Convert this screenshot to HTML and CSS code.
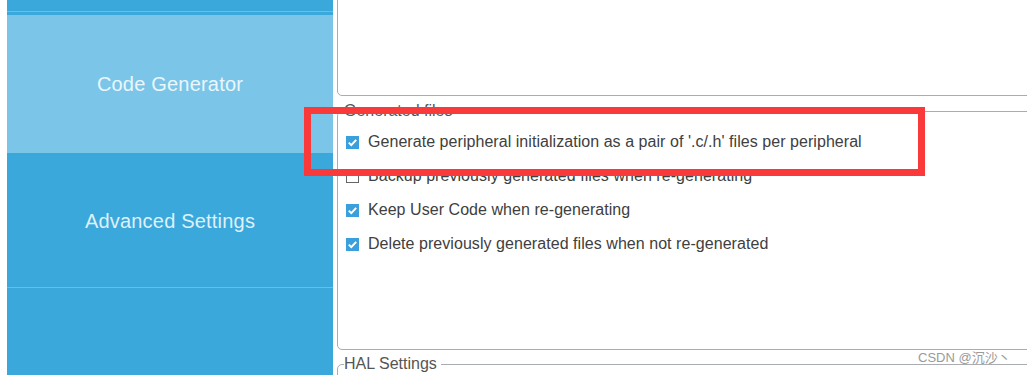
FILE: index.html
```html
<!DOCTYPE html>
<html lang="en">
<head>
    <meta charset="UTF-8">
    <title>Code Generator</title>
    <link rel="stylesheet" href="styles.css">
</head>
<body>
    <div class="page">
        <div class="sidebar">
            <div class="nav-item nav-top"></div>
            <div class="nav-strip"></div>
            <div class="nav-item nav-active">Code Generator</div>
            <div class="nav-item nav-adv">Advanced Settings</div>
            <div class="nav-item nav-rest"></div>
        </div>

        <div class="main">
            <div class="top-box"></div>

            <fieldset class="group group-files">
                <legend>Generated files</legend>
                <div class="check-row">
                    <span class="box checked"><svg viewBox="0 0 13 13"><path d="M2.8 6.6 L5.3 9.1 L10.2 3.9" fill="none" stroke="#fff" stroke-width="2"/></svg></span>
                    <span class="label">Generate peripheral initialization as a pair of '.c/.h' files per peripheral</span>
                </div>
                <div class="check-row">
                    <span class="box"></span>
                    <span class="label">Backup previously generated files when re-generating</span>
                </div>
                <div class="check-row">
                    <span class="box checked"><svg viewBox="0 0 13 13"><path d="M2.8 6.6 L5.3 9.1 L10.2 3.9" fill="none" stroke="#fff" stroke-width="2"/></svg></span>
                    <span class="label">Keep User Code when re-generating</span>
                </div>
                <div class="check-row">
                    <span class="box checked"><svg viewBox="0 0 13 13"><path d="M2.8 6.6 L5.3 9.1 L10.2 3.9" fill="none" stroke="#fff" stroke-width="2"/></svg></span>
                    <span class="label">Delete previously generated files when not re-generated</span>
                </div>
            </fieldset>

            <fieldset class="group group-hal">
                <legend>HAL Settings</legend>
            </fieldset>
        </div>
    </div>

    <div class="highlight"></div>
    <div class="watermark">CSDN @沉沙丶</div>
</body>
</html>
```

FILE: styles.css
```css
html, body {
    margin: 0;
    padding: 0;
    background: #fff;
}
body {
    width: 1027px;
    height: 375px;
    overflow: hidden;
    position: relative;
    font-family: "Liberation Sans", Arial, sans-serif;
}
.page {
    display: flex;
    height: 375px;
}
.sidebar {
    width: 326px;
    margin-left: 7px;
    display: flex;
    flex-direction: column;
    background: #3aa8db;
}
.nav-item {
    display: flex;
    align-items: center;
    justify-content: center;
    font-size: 20px;
    letter-spacing: 0.2px;
    color: #dff0fa;
}
.nav-top {
    height: 11px;
    border-bottom: 1px solid #6cbde4;
}
.nav-strip {
    height: 3px;
}
.nav-active {
    height: 138px;
    background: #7bc6e8;
    color: #eaf6fc;
}
.nav-adv {
    height: 131px;
    padding-top: 3px;
    border-bottom: 1px solid #6cbde4;
}
.nav-rest {
    flex: 1;
}
.main {
    margin-left: 4px;
    flex: 1;
    overflow: hidden;
}
.top-box {
    width: 760px;
    height: 114px;
    margin-top: -20px;
    border: 1px solid #a9acb0;
    border-radius: 5px;
}
.group {
    width: 760px;
    margin: 0;
    padding: 0 0 0 8px;
    border: 1px solid #a9acb0;
    border-radius: 5px;
    box-sizing: border-box;
}
.group legend {
    font-size: 16px;
    line-height: 18px;
    color: #555;
    padding: 0 4px 0 0;
    margin-left: -2px;
}
.group-files {
    margin-top: 6px;
    height: 248px;
    padding-top: 5px;
}
.group-hal {
    margin-top: 5px;
    height: 60px;
}
.check-row {
    display: flex;
    align-items: center;
    height: 34px;
}
.box {
    width: 13px;
    height: 13px;
    box-sizing: border-box;
    border: 1px solid #666;
    background: #fff;
    margin-right: 9px;
    flex: none;
}
.box svg {
    display: block;
    width: 13px;
    height: 13px;
}
.box.checked {
    border: none;
    background: #3b9fdc;
}
.label {
    font-size: 16px;
    letter-spacing: 0.05px;
    color: #404040;
    white-space: nowrap;
}
.highlight {
    position: absolute;
    left: 304px;
    top: 107px;
    width: 607px;
    height: 55px;
    border: 7px solid #fa3a3a;
}
.watermark {
    position: absolute;
    left: 918px;
    top: 349px;
    font-size: 13px;
    line-height: 18px;
    color: #9a9a9a;
    font-family: "Liberation Sans", "Noto Sans CJK SC", sans-serif;
}
```
